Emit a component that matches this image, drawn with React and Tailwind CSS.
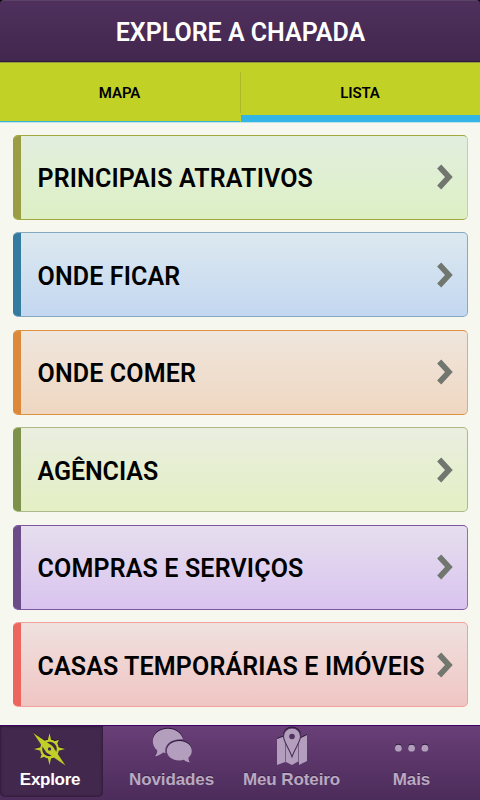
import React from 'react';

const categories = [
    { label: 'PRINCIPAIS ATRATIVOS', bar: 'bg-[#9b9d45]', border: 'border-y-[#a3a740] border-r-[#c5cfa3]', fill: 'from-[#e2eee0] to-[#ddf0c3]', spacing: 'tracking-[0.15px]' },
    { label: 'ONDE FICAR', bar: 'bg-[#337b9f]', border: 'border-y-[#84a9c1] border-r-[#86a9c8]', fill: 'from-[#dde9ef] to-[#c3d7f1]', spacing: 'tracking-[0.15px]' },
    { label: 'ONDE COMER', bar: 'bg-[#dc893b]', border: 'border-y-[#de9141] border-r-[#e4ab72]', fill: 'from-[#efe6dd] to-[#efd7c1]', spacing: 'tracking-[0.15px]' },
    { label: 'AGÊNCIAS', bar: 'bg-[#7e914a]', border: 'border-y-[#adb98b] border-r-[#adb98b]', fill: 'from-[#eaeee0] to-[#e3efc3]', spacing: 'tracking-[-0.05px]' },
    { label: 'COMPRAS E SERVIÇOS', bar: 'bg-[#6b4b88]', border: 'border-y-[#7d55a0] border-r-[#8e70aa]', fill: 'from-[#e6dfee] to-[#d9c3ef]', spacing: 'tracking-[0.16px]' },
    { label: 'CASAS TEMPORÁRIAS E IMÓVEIS', bar: 'bg-[#ec665f]', border: 'border-y-[#f2a09a] border-r-[#efa29d]', fill: 'from-[#efe1df] to-[#efc5c3]', spacing: 'tracking-[0.13px]' },
];

const Chevron = () => (
    <svg viewBox="0 0 16 26" className="mr-[14px] h-[26px] w-4 shrink-0">
        <path d="M2.2 2.5 L11.9 13 L2.2 23.5" fill="none" stroke="#71766f" strokeWidth="5.6" />
    </svg>
);

const CategoryRow = ({ item }) => (
    <button
        className={`flex h-[85px] w-full items-stretch overflow-hidden rounded-[5px] border border-l-0 bg-linear-to-b bg-origin-border text-left ${item.border} ${item.fill}`}
    >
        <span className={`-my-px w-2 shrink-0 ${item.bar}`} />
        <span className="flex min-w-0 flex-1 items-center justify-between pl-[17px]">
            <span className={`whitespace-nowrap pt-[2.4px] text-[25px] font-semibold leading-none text-black ${item.spacing}`}>{item.label}</span>
            <Chevron />
        </span>
    </button>
);

const CompassIcon = () => (
    <svg viewBox="0 0 34 34" className="h-[34px] w-[34px] drop-shadow-[0_-1px_0_#2b1735]">
        <circle cx="16.5" cy="17" r="8.4" fill="none" stroke="#c1d028" strokeWidth="2.2" />
        <path
            d="M16.5 1 L18.4 9 H14.6Z M16.5 33 L18.4 25 H14.6Z M1 17 L8.5 15.1 V18.9Z M32 17 L24.5 15.1 V18.9Z M25.8 7.8 L24 12.5 L21 9.5Z M7.2 26.2 L9 21.5 L12 24.5Z"
            fill="#c1d028"
        />
        <path d="M.8 1.4 L19.4 13.9 L32 33 L13.4 20.2Z" fill="#c1d028" stroke="#c1d028" strokeWidth="0.3" />
        <circle cx="16.5" cy="17" r="1.7" fill="#43284d" />
    </svg>
);

const ChatIcon = () => (
    <svg viewBox="0 0 40 35" className="h-[35px] w-10 drop-shadow-[0_-1px_0_#2b173a]">
        <path
            d="M16 .8 C7.5 .8 .8 6.2 .8 13 C.8 17 2.5 20 5.2 22.3 C5.2 24.5 4.3 26.5 3 28.2 C6.5 27.8 9 26.5 11 24.6 C12 24.9 12.5 25 13.5 25 C12 16 19 10.7 31 11.2 C29.5 5 23.5 .8 16 .8Z"
            fill="#b39fbd"
        />
        <path
            d="M27.3 13 C20.2 13 14.8 17.3 14.8 22.8 C14.8 28.3 20.2 32.5 27.3 32.5 C29 32.5 30.5 32.3 31.8 31.8 C33.2 33 35.5 34.2 38 34.5 C37 33 36.5 31.5 36.6 29.4 C38.8 27.6 39.8 25.5 39.8 22.8 C39.8 17.3 34.3 13 27.3 13Z"
            fill="#b39fbd"
        />
    </svg>
);

const MapIcon = () => (
    <svg viewBox="0 0 32 39" className="h-[39px] w-8 drop-shadow-[0_-1px_0_#2b173a]">
        <path d="M1 12 L9 9 V35 L1 38Z M10 15 L16 27 V38 L10 35Z M16 27 L22 15 V34.5 L16 38Z M23 12 L31 8 V34 L23 38Z" fill="#b39fbd" />
        <path d="M9.5 12 V35.5 M22.5 12 V35" stroke="#8c7299" strokeWidth="0.8" />
        <path
            d="M16 1 C11.2 1 7.5 4.7 7.5 9.3 C7.5 14.8 13 21 16 29.8 C19 21 24.5 14.8 24.5 9.3 C24.5 4.7 20.8 1 16 1Z"
            fill="#b39fbd"
            stroke="#4d315c"
            strokeWidth="1.1"
        />
        <circle cx="16" cy="9.5" r="2.8" fill="#513263" />
    </svg>
);

const DotsIcon = () => (
    <svg viewBox="0 0 36 10" className="h-[10px] w-9 drop-shadow-[0_-1px_0_#2b173a]">
        <circle cx="4.4" cy="5.2" r="3.4" fill="#b39fbd" />
        <circle cx="17.6" cy="5.2" r="3.4" fill="#b39fbd" />
        <circle cx="30.9" cy="5.2" r="3.4" fill="#b39fbd" />
    </svg>
);

const navItems = [
    { label: 'Novidades', icon: <ChatIcon />, box: 'pt-[2px]' },
    { label: 'Meu Roteiro', icon: <MapIcon />, box: 'pt-px' },
    { label: 'Mais', icon: <DotsIcon />, box: 'pt-[17px]' },
];

const App = () => (
    <div className="flex h-[800px] w-[480px] flex-col overflow-hidden bg-[#f6f7ef] font-['Roboto',sans-serif]">
        <div className="bg-black">
            <header className="flex h-[62px] items-center justify-center rounded-t-[4px] border-t border-[#5b4267] border-b border-b-[#31183b] bg-linear-to-b from-[#4f305d] to-[#42274e] pt-[3px] pl-px">
                <h1 className="whitespace-nowrap text-[25px] font-semibold leading-none text-white">EXPLORE A CHAPADA</h1>
            </header>
        </div>

        {/* Tabs */}
        <div className="flex h-[60px] shrink-0 border-t border-[#929940] bg-[#c1d126] text-[15px] font-semibold leading-none text-black">
            <button className="flex w-[240px] items-center justify-center border-b border-b-[#33b5d5] pt-[3px] pr-px tracking-[-0.1px]">MAPA</button>
            <span className="mt-[9px] mb-[9px] w-px bg-[#a9b92b]" />
            <button className="flex flex-1 items-center justify-center border-b-[7px] border-b-[#33b5e5] pt-[9px] pr-px tracking-[-0.1px]">LISTA</button>
        </div>

        <main className="flex flex-1 flex-col gap-[12.5px] border-t border-[#c0e2ec] pt-[11.9px] pr-[12px] pl-[12.5px]">
            {categories.map((item) => (
                <CategoryRow key={item.label} item={item} />
            ))}
        </main>

        {/* Bottom navigation */}
        <nav className="flex h-[75px] shrink-0 border-t border-[#40006a] bg-linear-to-b from-[#693f77] to-[#4c2c5b] font-['Liberation_Sans',Arial,sans-serif] text-[17px] font-bold leading-none">
            <button className="flex h-[71px] w-[103px] flex-col items-center rounded-b-[5px] bg-[#43284d] pt-[6px] pr-[3px] text-white shadow-[inset_0_0_3px_#21102a]">
                <CompassIcon />
                <span className="mt-auto mb-[9px] tracking-[-0.3px]">Explore</span>
            </button>
            <div className="flex flex-1 pl-[8.5px] text-[#b9a9c1]">
                {navItems.map((item) => (
                    <button key={item.label} className={`flex h-[71px] w-[120px] shrink-0 flex-col items-center ${item.box}`}>
                        {item.icon}
                        <span className="mt-auto mb-[9px] whitespace-nowrap tracking-[-0.1px] [text-shadow:0_-1px_0_#3c2348]">{item.label}</span>
                    </button>
                ))}
            </div>
        </nav>
    </div>
);

export default App;
